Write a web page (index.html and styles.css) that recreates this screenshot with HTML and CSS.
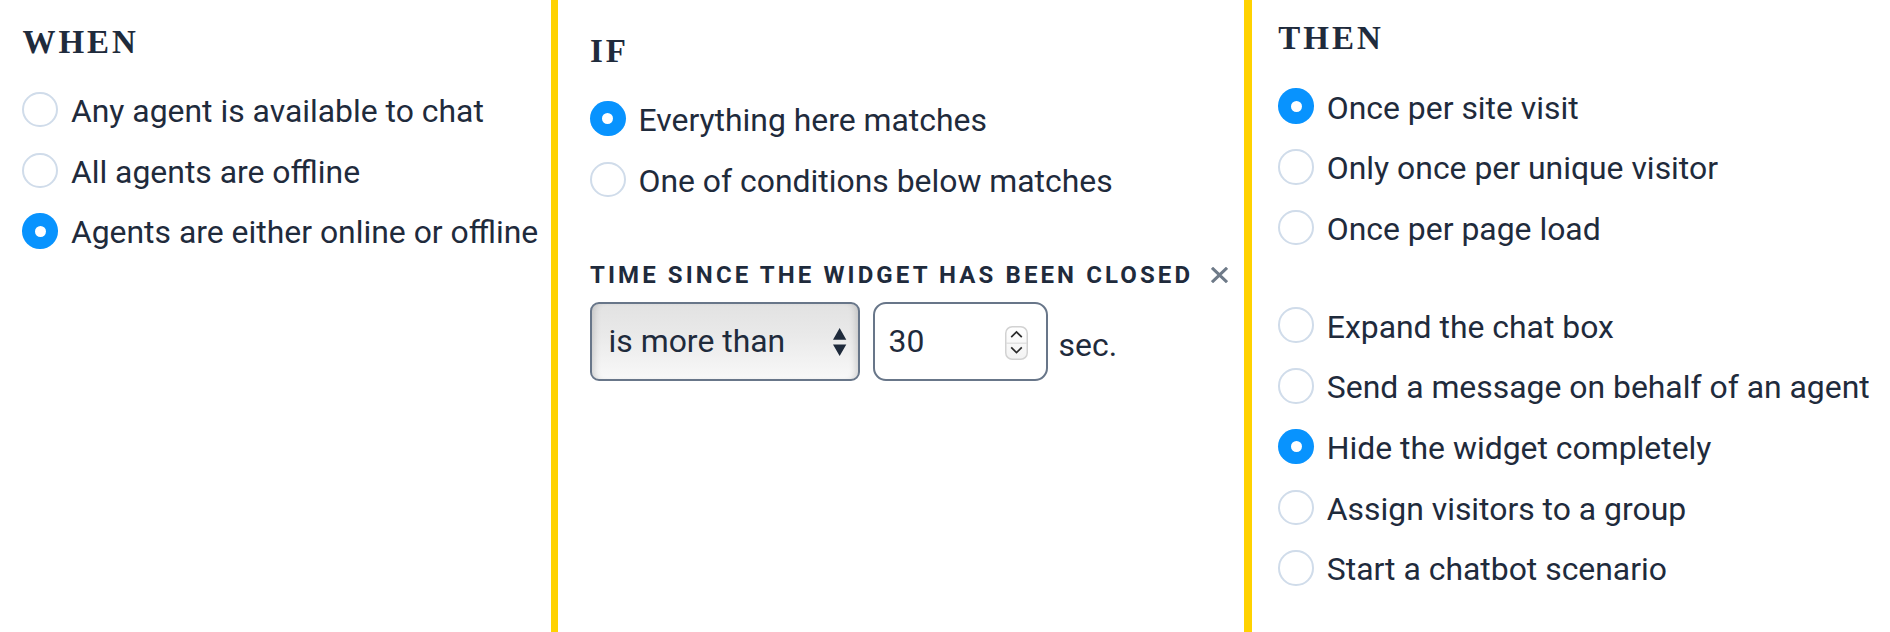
FILE: index.html
```html
<!DOCTYPE html>
<html lang="en">
<head>
<meta charset="utf-8">
<title>Trigger rule</title>
<link rel="stylesheet" href="styles.css">
</head>
<body>
<div class="rules">
  <section class="col col-when">
    <h2 class="col-title">WHEN</h2>
    <div class="options">
      <label class="option"><span class="radio"></span><span class="option-text">Any agent is available to chat</span></label>
      <label class="option"><span class="radio"></span><span class="option-text">All agents are offline</span></label>
      <label class="option"><span class="radio is-checked"></span><span class="option-text">Agents are either online or offline</span></label>
    </div>
  </section>

  <section class="col col-if">
    <h2 class="col-title">IF</h2>
    <div class="options">
      <label class="option"><span class="radio is-checked"></span><span class="option-text">Everything here matches</span></label>
      <label class="option"><span class="radio"></span><span class="option-text">One of conditions below matches</span></label>
    </div>
    <div class="condition">
      <div class="condition-head">
        <span class="condition-title">TIME SINCE THE WIDGET HAS BEEN CLOSED</span>
        <button class="remove" type="button" aria-label="Remove">
          <svg viewBox="0 0 17 16" width="17" height="16"><path d="M1 0.8 L16 15.2 M16 0.8 L1 15.2" stroke="#6e7a88" stroke-width="3" stroke-linecap="butt" fill="none"/></svg>
        </button>
      </div>
      <div class="condition-controls">
        <div class="select-wrap">
          <select class="op-select"><option>is more than</option></select>
          <svg class="select-arrows" viewBox="0 0 13.3 28"><path d="M0 11.7 L6.65 0 L13.3 11.7 Z M0 16.5 L6.65 28 L13.3 16.5 Z" fill="#1f2b3c"/></svg>
        </div>
        <div class="num-wrap">
          <input class="num-input" type="text" value="30">
          <svg class="spinner" viewBox="0 0 23 34">
            <defs><linearGradient id="sg" x1="0" y1="0" x2="0" y2="1"><stop offset="0" stop-color="#ffffff"/><stop offset="1" stop-color="#f3f3f3"/></linearGradient></defs>
            <rect x="0.75" y="0.75" width="21.5" height="32.5" rx="6.5" fill="url(#sg)" stroke="#d2d2d2" stroke-width="1.5"/>
            <path d="M1 17.2 H22" stroke="#dcdcdc" stroke-width="1.2"/>
            <path d="M6.2 11.2 L11.5 6 L16.8 11.2" stroke="#2b2b2b" stroke-width="1.7" fill="none"/>
            <path d="M6.2 21.4 L11.5 26.6 L16.8 21.4" stroke="#2b2b2b" stroke-width="1.7" fill="none"/>
          </svg>
        </div>
        <span class="unit">sec.</span>
      </div>
    </div>
  </section>

  <section class="col col-then">
    <h2 class="col-title">THEN</h2>
    <div class="options">
      <label class="option"><span class="radio is-checked"></span><span class="option-text">Once per site visit</span></label>
      <label class="option"><span class="radio"></span><span class="option-text">Only once per unique visitor</span></label>
      <label class="option"><span class="radio"></span><span class="option-text">Once per page load</span></label>
    </div>
    <div class="options">
      <label class="option"><span class="radio"></span><span class="option-text">Expand the chat box</span></label>
      <label class="option"><span class="radio"></span><span class="option-text">Send a message on behalf of an agent</span></label>
      <label class="option"><span class="radio is-checked"></span><span class="option-text">Hide the widget completely</span></label>
      <label class="option"><span class="radio"></span><span class="option-text">Assign visitors to a group</span></label>
      <label class="option"><span class="radio"></span><span class="option-text">Start a chatbot scenario</span></label>
    </div>
  </section>
</div>
</body>
</html>
```

FILE: styles.css
```css
html, body {
  margin: 0;
  background: #ffffff;
}

body {
  font-family: Roboto, "Liberation Sans", Arial, sans-serif;
  color: #1f2b3c;
}

.rules {
  display: flex;
  height: 632px;
  overflow: hidden;
}

.col {
  box-sizing: border-box;
  flex: none;
}

.col-when {
  width: 551px;
  padding: 25.6px 0 0 22.4px;
}

.col-if {
  width: 693px;
  border-left: 7px solid #ffd200;
  padding: 34.6px 0 0 32px;
}

.col-then {
  flex: 1;
  border-left: 8px solid #ffd200;
  padding: 22px 0 0 26.3px;
}

.col-title {
  margin: 0 0 20.8px;
  font-family: "Liberation Serif", "DejaVu Serif", serif;
  font-weight: 700;
  font-size: 33px;
  line-height: 33px;
  letter-spacing: 3px;
  color: #1f2b3c;
}

.options + .options {
  margin-top: 37px;
}

.option {
  display: flex;
  align-items: center;
  gap: 13px;
  height: 60.7px;
  font-size: 31.9px;
  white-space: nowrap;
}

.radio {
  flex: none;
  box-sizing: border-box;
  width: 35.5px;
  height: 35.5px;
  border: 2px solid #d0dcea;
  border-radius: 50%;
  background: #ffffff;
}

.radio.is-checked {
  display: grid;
  place-items: center;
  border: none;
  background: #0893fe;
}

.radio.is-checked::after {
  content: "";
  width: 11px;
  height: 11px;
  border-radius: 50%;
  background: #ffffff;
}

.option-text {
  line-height: 1.2;
  margin-top: 3px;
}

.condition {
  margin-top: 53px;
}

.condition-head {
  display: flex;
  align-items: center;
  height: 24px;
}

.condition-title {
  font-weight: 700;
  font-size: 24px;
  line-height: 24px;
  letter-spacing: 3.1px;
  white-space: nowrap;
}

.remove {
  display: flex;
  margin-left: 18px;
  padding: 0;
  border: 0;
  background: none;
  width: 17px;
  height: 16px;
  margin-top: 1px;
}

.condition-controls {
  display: flex;
  align-items: center;
  margin-top: 15.4px;
}

.select-wrap {
  position: relative;
  width: 270.3px;
  height: 78.4px;
  flex: none;
}

.op-select {
  -webkit-appearance: none;
  appearance: none;
  box-sizing: border-box;
  width: 100%;
  height: 100%;
  margin: 0;
  padding: 0 0 0 16.6px;
  border: 2px solid #687689;
  border-radius: 9px;
  background: linear-gradient(#e2e2e2, #e9e9e9 40%, #f8f8f8);
  box-shadow: inset 7px 0 7px -5px rgba(0, 0, 0, 0.16), inset -7px 0 7px -5px rgba(0, 0, 0, 0.16);
  font-family: Roboto, "Liberation Sans", Arial, sans-serif;
  font-size: 31.9px;
  color: #1f2b3c;
  outline: none;
}

.select-arrows {
  position: absolute;
  left: 243.3px;
  top: 25.8px;
  width: 13.3px;
  height: 28px;
  pointer-events: none;
}

.num-wrap {
  position: relative;
  flex: none;
  margin-left: 12.3px;
  width: 175px;
  height: 78.4px;
}

.num-input {
  box-sizing: border-box;
  width: 100%;
  height: 100%;
  margin: 0;
  padding: 0 0 0 14px;
  border: 2px solid #687689;
  border-radius: 13px;
  background: #ffffff;
  font-family: Roboto, "Liberation Sans", Arial, sans-serif;
  font-size: 31.9px;
  color: #1f2b3c;
  outline: none;
}

.spinner {
  position: absolute;
  left: 132.4px;
  top: 23.7px;
  width: 23px;
  height: 34px;
  pointer-events: none;
}

.unit {
  margin-left: 11px;
  padding-top: 8px;
  font-size: 31.9px;
  line-height: 1.2;
}
```
